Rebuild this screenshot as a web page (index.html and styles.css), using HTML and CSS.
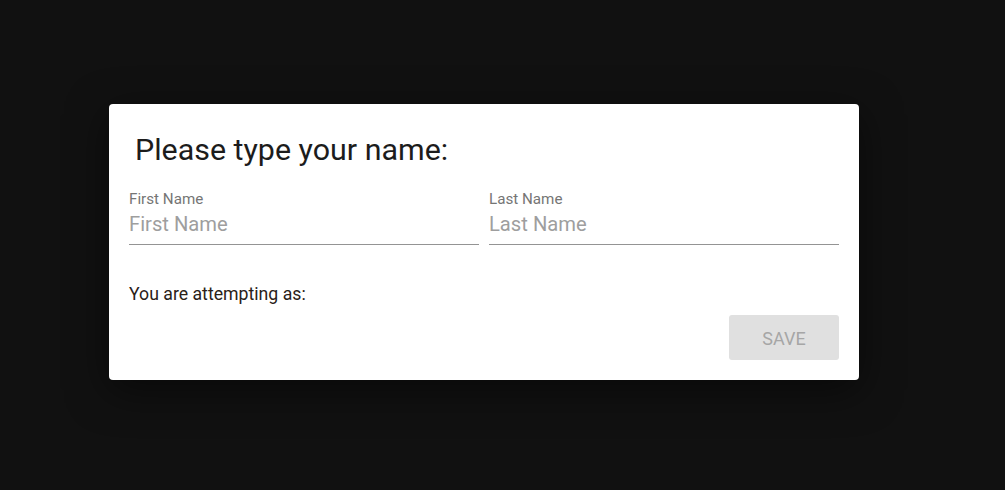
FILE: index.html
```html
<!DOCTYPE html>
<html>
<head>
<meta charset="utf-8">
<link rel="stylesheet" href="styles.css">
</head>
<body>
<div class="backdrop">
  <div class="dialog">
    <h2 class="title">Please type your name:</h2>
    <div class="fields">
      <label class="field">
        <span class="label">First Name</span>
        <input class="input" type="text" placeholder="First Name">
      </label>
      <label class="field">
        <span class="label">Last Name</span>
        <input class="input" type="text" placeholder="Last Name">
      </label>
    </div>
    <p class="note">You are attempting as:</p>
    <div class="actions">
      <button class="save" disabled>SAVE</button>
    </div>
  </div>
</div>
</body>
</html>
```
FILE: styles.css
```css
html, body {
  margin: 0;
  padding: 0;
  background: #111111;
  height: 100%;
  font-family: Roboto, "Liberation Sans", sans-serif;
}
.backdrop {
  display: flex;
  align-items: flex-start;
  padding: 104px 0 0 109px;
  height: 100%;
  box-sizing: border-box;
}
.dialog {
  width: 750px;
  height: 276px;
  box-sizing: border-box;
  background: #ffffff;
  border-radius: 4px;
  padding: 20px 20px 20px 20px;
  box-shadow: 0 10px 40px rgba(0,0,0,0.5);
  display: flex;
  flex-direction: column;
}
.title {
  margin: 6px 0 0 6px;
  font-size: 30.4px;
  font-weight: 400;
  line-height: 40px;
  color: #1c1c1c;
}
.fields {
  display: flex;
  gap: 10px;
  margin-top: 20px;
}
.field {
  flex: 1;
  display: flex;
  flex-direction: column;
}
.label {
  font-size: 15.2px;
  line-height: 18px;
  color: #757575;
}
.input {
  border: none;
  border-bottom: 1px solid #949494;
  outline: none;
  padding: 3px 0 8px 0;
  margin: 0;
  font-family: inherit;
  font-size: 20.2px;
  line-height: 26px;
  height: 37px;
  box-sizing: border-box;
  color: #212121;
  background: transparent;
}
.input::placeholder {
  color: #9e9e9e;
}
.note {
  margin: 39px 0 0 0;
  font-size: 17.7px;
  line-height: 20px;
  color: #2a2118;
}
.actions {
  display: flex;
  justify-content: flex-end;
  margin-top: 11px;
}
.save {
  width: 110px;
  height: 45px;
  border: none;
  border-radius: 3px;
  background: #e0e0e0;
  color: #a6a6a6;
  font-family: inherit;
  font-size: 18px;
  font-weight: 400;
  padding: 1px 0 0 0;
}
```
